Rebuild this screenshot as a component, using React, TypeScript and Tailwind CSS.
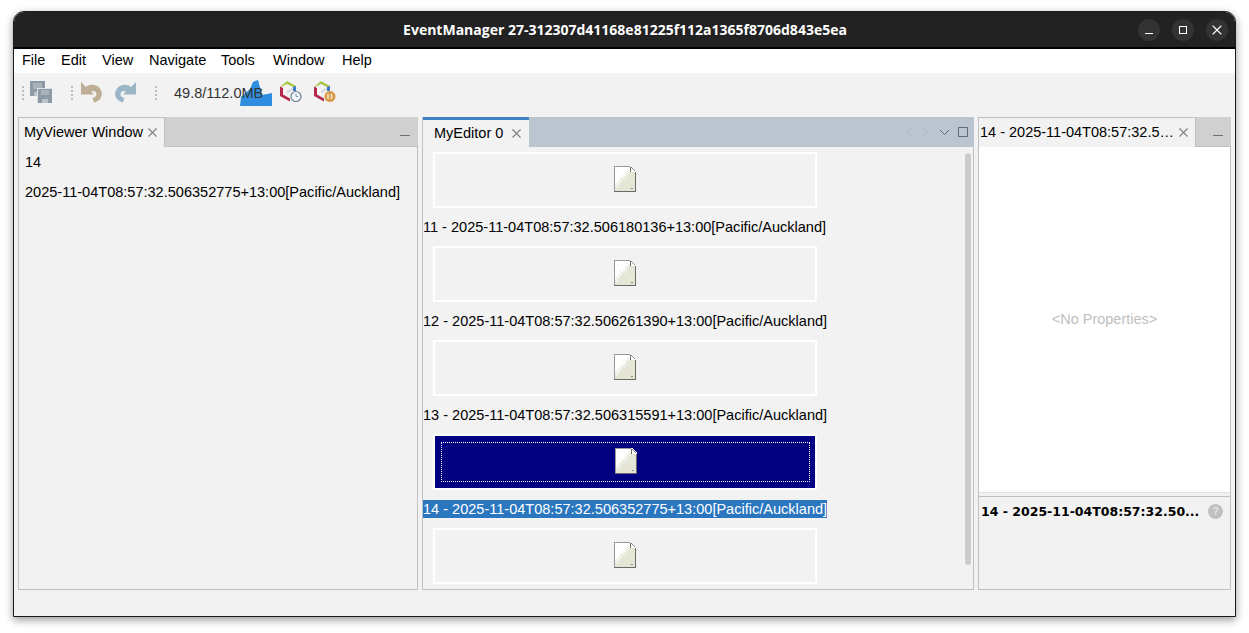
import { X } from "lucide-react";

const menus = [
  { label: "File", width: "w-[23px]" },
  { label: "Edit", width: "w-[25px]" },
  { label: "View", width: "w-[31px]" },
  { label: "Navigate", width: "w-[56px]" },
  { label: "Tools", width: "w-[36px]" },
  { label: "Window", width: "w-[53px]" },
  { label: "Help", width: "w-[29px]" },
];

const rows = [
  { label: "11 - 2025-11-04T08:57:32.506180136+13:00[Pacific/Auckland]" },
  { label: "12 - 2025-11-04T08:57:32.506261390+13:00[Pacific/Auckland]" },
  { label: "13 - 2025-11-04T08:57:32.506315591+13:00[Pacific/Auckland]" },
  { label: "14 - 2025-11-04T08:57:32.506352775+13:00[Pacific/Auckland]", selected: true },
];

// white-to-cream dither of the old document icon
function ditherPath() {
  let d = "";
  for (let y = 1; y < 25; y++) {
    for (let x = 1; x < 21; x++) {
      const t = (x - 2) / 18 + (y - 4) / 20;
      const noise = ((x * 7 + y * 13) % 5) / 5;
      if (t < 0.55 || (t < 1 && (t - 0.55) / 0.45 < noise)) d += `M${x} ${y}h1v1h-1z`;
    }
  }
  return d;
}

const dither = ditherPath();

function FileIcon() {
  return (
    <svg width="22" height="26" viewBox="0 0 22 26" shapeRendering="crispEdges">
      <path d="M0 0H16L21 5V25H0Z" fill="#e6e6d6" />
      <path d={dither} fill="#ffffff" />
      <path d="M0 0H16V1H1V25H0Z" fill="#9a9a9a" />
      <path d="M21 6H22V26H0V25H21Z" fill="#6a6a6a" />
      <path d="M16 1H17V5H21V6H16Z" fill="#6a6a6a" />
      <path d="M17 0h1v1h1v1h1v1h1v1h1v2h-5z" fill="#ffffff" />
      <path d="M17 1h1v1h1v1h1v1h1v1h-1v-1h-1v-1h-1v-1h-1z" fill="#8a8a8a" />
      <path d="M17 22h2v1h-2z" fill="#8f8f80" />
    </svg>
  );
}

function Grip() {
  return (
    <div className="flex flex-col gap-[2px] w-[2px] mt-[2px]">
      <div className="w-[2px] h-[2px] bg-[#bdbdbd]" />
      <div className="w-[2px] h-[2px] bg-[#bdbdbd]" />
      <div className="w-[2px] h-[2px] bg-[#bdbdbd]" />
      <div className="w-[2px] h-[2px] bg-[#bdbdbd]" />
    </div>
  );
}

function SaveAllIcon() {
  return (
    <svg width="22" height="22" viewBox="0 0 22 22">
      <path d="M0 0H15V15H0Z" fill="#8d9aa5" />
      <path d="M3 2H12V8H3Z" fill="#aab3bb" />
      <path d="M4 11H11V15H4Z" fill="#bcc3c9" />
      <path d="M7 7H22V22H7Z" fill="#dfe2e4" />
      <path d="M8 8H22V22H8Z" fill="#8d9aa5" />
      <path d="M11 9H19V14H11Z" fill="#aab3bb" />
      <path d="M12 18H18V22H12Z" fill="#bcc3c9" />
    </svg>
  );
}

function UndoIcon({ flip }: { flip?: boolean }) {
  return (
    <svg width="22" height="21" viewBox="0 0 22 21" className={flip ? "-scale-x-100" : ""}>
      <path
        d="M0 0L5 5C8 2.5 13 2 17 4.5C21 7.5 22 13 19.5 16.5C18 18.5 15.5 20 13 20.5L11.5 16C14 15.5 15.5 14 15.5 12C15.5 9.5 12.5 8 10 9.5L13 12.5H0Z"
        fill={flip ? "#9cb6c8" : "#bfae96"}
      />
    </svg>
  );
}

function CubeIcon({ badge }: { badge: "clock" | "pause" }) {
  return (
    <svg width="24" height="22" viewBox="0 0 24 22">
      <path d="M9 0L18 5V9L15 7.5V6L9 3L3 6V5Z" fill="#a9c64b" />
      <path d="M2 5.5L5 7V13.5L12 17.5V20.5L2 15Z" fill="#b5274e" />
      <path d="M5 7L9 9.5V14.5L5 13Z" fill="#f4f4f4" />
      <path d="M9 9.5L15 6.5V9L9 13Z" fill="#dcdcdc" />
      <path d="M15 6L18 5V10H15Z" fill="#3c7bc8" />
      {badge === "clock" ? (
        <>
          <circle cx="18" cy="15.5" r="5" fill="#f2f6f8" stroke="#6f8699" strokeWidth="1.2" />
          <path d="M18 12.5V15.5H20" fill="none" stroke="#7d93a5" strokeWidth="1" />
        </>
      ) : (
        <>
          <circle cx="18" cy="15.5" r="5.5" fill="#d99a4b" />
          <path d="M16 13V18M19.5 13V18" fill="none" stroke="#f6e9d2" strokeWidth="1.5" />
        </>
      )}
    </svg>
  );
}

function TabClose() {
  return <X className="w-[15px] h-[15px] text-[#7f7f7f]" strokeWidth={1.7} />;
}

function Minimize({ className }: { className?: string }) {
  return <div className={`w-[10px] h-px bg-[#707070] ${className ?? ""}`} />;
}

function WindowButton({ children }: { children: React.ReactNode }) {
  return (
    <div className="w-[22px] h-[22px] rounded-full bg-[#333333] flex items-center justify-center">{children}</div>
  );
}

function ItemBox() {
  return (
    <div className="w-[384px] h-[56px] border-2 border-white pb-[2px] flex items-center justify-center">
      <FileIcon />
    </div>
  );
}

export default function App() {
  return (
    <div
      className="w-[1249px] h-[633px] bg-white overflow-hidden pt-[11px] pl-[13px] text-[14.5px] text-black"
      style={{ fontFamily: '"Liberation Sans", Arial, sans-serif' }}
    >
      <div className="w-[1223px] h-[606px] flex flex-col bg-[#f2f2f2] border border-[#1a1a1a] rounded-t-[11px] shadow-[0_3px_8px_rgba(0,0,0,0.4)] overflow-hidden">
        {/* title bar */}
        <div className="h-[37px] shrink-0 bg-[#222222] border-b-2 border-black relative flex items-center justify-center">
          <span className="text-white text-[14px] font-bold font-['Open_Sans',sans-serif] ml-[1px]">
            EventManager 27-312307d41168e81225f112a1365f8706d843e5ea
          </span>
          <div className="absolute right-[7px] top-[7px] flex gap-[12px]">
            <WindowButton>
              <div className="w-[8px] h-[1.5px] bg-white mt-[7px]" />
            </WindowButton>
            <WindowButton>
              <div className="w-[8px] h-[8px] border border-white" />
            </WindowButton>
            <WindowButton>
              <X className="w-[16px] h-[16px] text-white" strokeWidth={1.6} />
            </WindowButton>
          </div>
        </div>

        {/* menu */}
        <div className="h-[24px] shrink-0 bg-white flex items-center pl-[8px] gap-[16px]">
          {menus.map((m) => (
            <span key={m.label} className={`${m.width} whitespace-nowrap`}>
              {m.label}
            </span>
          ))}
        </div>

        {/* toolbar */}
        <div className="h-[44px] shrink-0 flex items-center pl-[8px] pb-[6px]">
          <Grip />
          <div className="ml-[6px]">
            <SaveAllIcon />
          </div>
          <div className="ml-[19px]">
            <Grip />
          </div>
          <div className="ml-[8px]">
            <UndoIcon />
          </div>
          <div className="ml-[11px]">
            <UndoIcon flip />
          </div>
          <div className="ml-[19px]">
            <Grip />
          </div>
          <div className="ml-[17px] mt-[2px] relative w-[98px] h-[26px] flex items-center">
            <svg className="absolute left-[66px] top-0" width="32" height="26" viewBox="0 0 32 26">
              <path d="M0 26L1 17L10 9L13 2L18 0L22 15L32 13V26Z" fill="#2f8ee0" />
            </svg>
            <span className="relative pt-[2px] text-[#333333] whitespace-nowrap">49.8/112.0MB</span>
          </div>
          <div className="ml-[6px]">
            <CubeIcon badge="clock" />
          </div>
          <div className="ml-[10px]">
            <CubeIcon badge="pause" />
          </div>
        </div>

        {/* panels */}
        <div className="h-[473px] shrink-0 flex pl-[4px] gap-[4px]">
          {/* viewer */}
          <div className="w-[400px] flex flex-col">
            <div className="h-[30px] shrink-0 flex items-stretch bg-[#d0d0d0] border-b border-[#c0c0c0]">
              <div className="w-[147px] -mb-px border border-b-0 border-[#c0c0c0] bg-[#f2f2f2] flex items-center pl-[5px] gap-[2px]">
                <span>MyViewer Window</span>
                <TabClose />
              </div>
              <Minimize className="ml-auto mr-[8px] mt-[18px]" />
            </div>
            <div className="flex-1 border border-t-0 border-[#c0c0c0] pl-[6px] pt-[6px]">
              <div className="h-[18px] leading-[18px]">14</div>
              <div className="h-[18px] leading-[18px] mt-[12px] text-[14.54px] whitespace-nowrap">
                2025-11-04T08:57:32.506352775+13:00[Pacific/Auckland]
              </div>
            </div>
          </div>

          {/* editor */}
          <div className="w-[552px] flex flex-col">
            <div className="h-[30px] shrink-0 flex items-stretch bg-[#bbc5d0] pl-px">
              <div className="w-[106px] bg-[#f2f2f2] border-t-[3px] border-[#3d80c4] flex items-center pl-[11px] gap-[6px]">
                <span>MyEditor 0</span>
                <TabClose />
              </div>
              <div className="ml-auto flex items-center pr-[5px] pb-[1px]">
                <svg width="64" height="12" viewBox="0 0 64 12" fill="none">
                  <path d="M7 1.5L2.5 6L7 10.5" stroke="#a9b2bc" />
                  <path d="M18 1.5L22.5 6L18 10.5" stroke="#a9b2bc" />
                  <path d="M35 4L39.5 8.5L44 4" stroke="#606a74" />
                  <path d="M53.5 1.5H62.5V10.5H53.5Z" stroke="#606a74" />
                </svg>
              </div>
            </div>
            <div className="flex-1 relative border border-t-0 border-[#c0c0c0] pl-[10px] pt-[5px] overflow-hidden">
              <ItemBox />
              {rows.map((r) => (
                <div key={r.label}>
                  <div className="h-[38px] flex items-center -ml-[10px]">
                    <span
                      className={`h-[18px] leading-[18px] text-[14.54px] whitespace-nowrap ${
                        r.selected ? "bg-[#2a76bf] text-white" : ""
                      }`}
                    >
                      {r.label}
                    </span>
                  </div>
                  {r.label.startsWith("13") ? (
                    <div className="w-[384px] h-[56px] border-2 border-white bg-[#000080] pl-[6px] pr-[5px] py-[6px]">
                      <div className="h-full border border-dotted border-white pb-[2px] flex items-center justify-center">
                        <FileIcon />
                      </div>
                    </div>
                  ) : (
                    <ItemBox />
                  )}
                </div>
              ))}
              <div className="absolute right-[2px] top-[6px] w-[6px] h-[412px] rounded-[3px] bg-[#cccccc]" />
            </div>
          </div>

          {/* properties */}
          <div className="w-[253px] flex flex-col">
            <div className="h-[30px] shrink-0 flex items-stretch bg-[#d0d0d0] border-b border-[#c0c0c0]">
              <div className="w-[218px] -mb-px border border-b-0 border-[#c0c0c0] bg-[#f2f2f2] flex items-center pl-[1px] gap-[2px]">
                <span className="whitespace-nowrap">14 - 2025-11-04T08:57:32.5…</span>
                <TabClose />
              </div>
              <Minimize className="ml-auto mr-[8px] mt-[18px]" />
            </div>
            <div className="flex-1 flex flex-col border border-t-0 border-[#c0c0c0]">
              <div className="h-[345px] bg-white flex items-center justify-center text-[#c0c0c0]">
                {"<No Properties>"}
              </div>
              <div className="h-[5px] border-t border-b border-t-[#e0e0e0] border-b-[#c0c0c0] bg-[#f2f2f2]" />
              <div className="flex items-start pl-[2px] pt-[6px] pr-[7px] justify-between">
                <span className="font-bold text-[12.5px] font-['DejaVu_Sans',sans-serif] whitespace-nowrap">
                  14 - 2025-11-04T08:57:32.50...
                </span>
                <span className="w-[15px] h-[15px] mt-[1px] rounded-full bg-[#c0c0c0] text-[#e2e2e2] text-[11px] leading-[15px] font-bold text-center">
                  ?
                </span>
              </div>
            </div>
          </div>
        </div>
      </div>
    </div>
  );
}
